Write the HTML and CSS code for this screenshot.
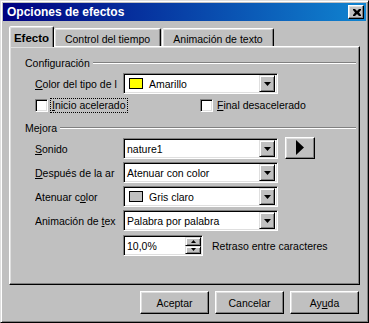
FILE: index.html
```html
<!DOCTYPE html>
<html lang="es">
<head>
    <meta charset="UTF-8">
    <title>Opciones de efectos</title>
    <link rel="stylesheet" href="styles.css">
</head>
<body>
    <div class="window">
        <div class="titlebar">
            <span class="title">Opciones de efectos</span>
            <div class="close-btn">
                <svg width="8" height="7" viewBox="0 0 8 7"><path d="M0 0h2l2 2 2-2h2v1L6 3.5 8 6v1H6L4 5 2 7H0V6l2-2.5L0 1z" fill="#000"/></svg>
            </div>
        </div>
        <div class="dialog-body">
            <div class="tabs">
                <div class="tab tab-active">Efecto</div>
                <div class="tab tab-time">Control del tiempo</div>
                <div class="tab tab-anim">Animación de texto</div>
            </div>
            <div class="panel">
                <div class="group-title"><span>Configuración</span><div class="etched"></div></div>
                <div class="field-row first-field">
                    <span class="field-label"><u>C</u>olor del tipo de l</span>
                    <div class="combo">
                        <div class="combo-value"><span class="swatch swatch-yellow"></span>Amarillo</div>
                        <div class="combo-arrow"><svg width="7" height="4" viewBox="0 0 7 4"><path d="M0 0h7L3.5 4z" fill="#000"/></svg></div>
                    </div>
                </div>
                <div class="check-row">
                    <div class="check-item check-first"><span class="checkbox"></span><span class="check-text focused"><u>I</u>nicio acelerado</span></div>
                    <div class="check-item"><span class="checkbox"></span><span class="check-text"><u>F</u>inal desacelerado</span></div>
                </div>
                <div class="group-title group-second"><span>Mejora</span><div class="etched"></div></div>
                <div class="field-row first-field">
                    <span class="field-label"><u>S</u>onido</span>
                    <div class="combo">
                        <div class="combo-value">nature1</div>
                        <div class="combo-arrow"><svg width="7" height="4" viewBox="0 0 7 4"><path d="M0 0h7L3.5 4z" fill="#000"/></svg></div>
                    </div>
                    <div class="play-btn"><svg width="8" height="15" viewBox="0 0 8 15"><path d="M0 0l8 7.5L0 15z" fill="#000"/></svg></div>
                </div>
                <div class="field-row">
                    <span class="field-label"><u>D</u>espués de la ar</span>
                    <div class="combo">
                        <div class="combo-value">Atenuar con color</div>
                        <div class="combo-arrow"><svg width="7" height="4" viewBox="0 0 7 4"><path d="M0 0h7L3.5 4z" fill="#000"/></svg></div>
                    </div>
                </div>
                <div class="field-row">
                    <span class="field-label">Atenuar c<u>o</u>lor</span>
                    <div class="combo">
                        <div class="combo-value"><span class="swatch swatch-gray"></span>Gris claro</div>
                        <div class="combo-arrow"><svg width="7" height="4" viewBox="0 0 7 4"><path d="M0 0h7L3.5 4z" fill="#000"/></svg></div>
                    </div>
                </div>
                <div class="field-row">
                    <span class="field-label">Animación de <u>t</u>ex</span>
                    <div class="combo">
                        <div class="combo-value">Palabra por palabra</div>
                        <div class="combo-arrow"><svg width="7" height="4" viewBox="0 0 7 4"><path d="M0 0h7L3.5 4z" fill="#000"/></svg></div>
                    </div>
                </div>
                <div class="field-row spin-row">
                    <span class="field-label"></span>
                    <div class="spin">
                        <div class="spin-value">10,0%</div>
                        <div class="spin-buttons">
                            <div class="spin-btn"><svg width="5" height="3" viewBox="0 0 5 3"><path d="M2.5 0L5 3H0z" fill="#000"/></svg></div>
                            <div class="spin-btn"><svg width="5" height="3" viewBox="0 0 5 3"><path d="M0 0h5L2.5 3z" fill="#000"/></svg></div>
                        </div>
                    </div>
                    <span class="spin-label">Retraso entre caracteres</span>
                </div>
            </div>
            <div class="button-row">
                <div class="btn">Aceptar</div>
                <div class="btn">Cancelar</div>
                <div class="btn">Ay<u>u</u>da</div>
            </div>
        </div>
    </div>
</body>
</html>
```

FILE: styles.css
```css
body {
    margin: 0;
    font-family: "Liberation Sans", Arial, sans-serif;
    font-size: 10.5px;
    color: #000;
    background-color: #c0c0c0;
}
u {
    text-decoration: underline;
    text-underline-offset: 1px;
}
.window {
    width: 369px;
    height: 323px;
    box-sizing: border-box;
    background-color: #c0c0c0;
    border: 1px solid;
    border-color: #dfdfdf #000 #000 #dfdfdf;
    box-shadow: inset 1px 1px #fff, inset -1px -1px #808080;
    padding: 2px;
}
.titlebar {
    height: 18px;
    display: flex;
    align-items: center;
    justify-content: space-between;
    padding: 0 2px 0 4px;
    background: linear-gradient(to right, #000080, #1084d0);
}
.title {
    color: #fff;
    font-weight: bold;
    font-size: 12px;
}
.close-btn {
    width: 16px;
    height: 14px;
    box-sizing: border-box;
    background-color: #c0c0c0;
    border: 1px solid;
    border-color: #fff #000 #000 #fff;
    box-shadow: inset -1px -1px #808080, inset 1px 1px #dfdfdf;
    display: flex;
    align-items: center;
    justify-content: center;
    padding-left: 1px;
}
.dialog-body {
    padding: 5px 6px 0 6px;
}
.tabs {
    display: flex;
    align-items: flex-end;
    height: 20px;
    position: relative;
    z-index: 1;
}
.tab {
    height: 18px;
    box-sizing: border-box;
    border: 1px solid;
    border-bottom: none;
    border-color: #fff #000 transparent #fff;
    border-radius: 2px 2px 0 0;
    box-shadow: inset -1px 0 #808080, inset 1px 1px #dfdfdf;
    padding-top: 4px;
    line-height: 13px;
    text-align: center;
    white-space: nowrap;
    background-color: #c0c0c0;
}
.tab-active {
    width: 45px;
    height: 21px;
    margin-bottom: -1px;
    padding-top: 5px;
    font-weight: bold;
    font-size: 11.5px;
}
.tab-time {
    width: 107px;
}
.tab-anim {
    width: 112px;
    margin-left: 1px;
}
.panel {
    height: 239px;
    box-sizing: border-box;
    border: 1px solid;
    border-color: #fff #000 #000 #fff;
    box-shadow: inset -1px -1px #808080, inset 1px 1px #dfdfdf;
    padding: 9px 0 0 1px;
}
.group-title {
    display: flex;
    align-items: center;
    height: 14px;
    padding-left: 14px;
    margin-right: 3px;
}
.group-second {
    margin-top: 8px;
}
.etched {
    flex: 1;
    height: 0;
    border-top: 1px solid #808080;
    border-bottom: 1px solid #fff;
    margin-left: 3px;
}
.field-row {
    display: flex;
    align-items: center;
    height: 21px;
    padding-left: 24px;
    margin-top: 3px;
}
.first-field {
    margin-top: 3px;
}
.spin-row {
    margin-top: 4px;
}
.field-label {
    width: 88px;
    white-space: nowrap;
    overflow: hidden;
}
.combo {
    width: 155px;
    height: 21px;
    box-sizing: border-box;
    display: flex;
    align-items: center;
    background-color: #fff;
    border: 1px solid;
    border-color: #808080 #fff #fff #808080;
    box-shadow: inset 1px 1px #000, inset -1px -1px #dfdfdf;
    padding: 1px 2px 1px 2px;
}
.combo-value {
    flex: 1;
    display: flex;
    align-items: center;
    padding-left: 1px;
    white-space: nowrap;
}
.swatch {
    width: 14px;
    height: 11px;
    box-sizing: border-box;
    border: 1px solid #000;
    margin: 0 6px 0 2px;
}
.swatch-yellow {
    background-color: #ffff00;
}
.swatch-gray {
    background-color: #c0c0c0;
}
.combo-arrow {
    width: 16px;
    height: 17px;
    box-sizing: border-box;
    background-color: #c0c0c0;
    border: 1px solid;
    border-color: #dfdfdf #000 #000 #dfdfdf;
    box-shadow: inset 1px 1px #fff, inset -1px -1px #808080;
    display: flex;
    align-items: center;
    justify-content: center;
    padding-top: 1px;
}
.play-btn {
    width: 30px;
    height: 22px;
    box-sizing: border-box;
    margin-left: 7px;
    margin-top: -2px;
    border: 1px solid;
    border-color: #fff #000 #000 #fff;
    box-shadow: inset -1px -1px #808080, inset 1px 1px #dfdfdf;
    display: flex;
    align-items: center;
    justify-content: center;
}
.check-row {
    display: flex;
    align-items: center;
    height: 15px;
    padding-left: 24px;
    margin-top: 4px;
}
.check-item {
    display: flex;
    align-items: center;
}
.check-first {
    width: 165px;
}
.checkbox {
    width: 13px;
    height: 13px;
    box-sizing: border-box;
    background-color: #fff;
    border: 1px solid;
    border-color: #808080 #fff #fff #808080;
    box-shadow: inset 1px 1px #000, inset -1px -1px #dfdfdf;
    margin-right: 3px;
}
.check-text {
    padding: 0 1px;
    line-height: 13px;
}
.focused {
    outline: 1px dotted #000;
}
.spin {
    width: 80px;
    height: 21px;
    box-sizing: border-box;
    display: flex;
    align-items: center;
    background-color: #fff;
    border: 1px solid;
    border-color: #808080 #fff #fff #808080;
    box-shadow: inset 1px 1px #000, inset -1px -1px #dfdfdf;
    padding: 1px;
}
.spin-value {
    flex: 1;
    padding-left: 2px;
}
.spin-buttons {
    display: flex;
    flex-direction: column;
    width: 16px;
    height: 17px;
}
.spin-btn {
    flex: 1;
    box-sizing: border-box;
    background-color: #c0c0c0;
    border: 1px solid;
    border-color: #dfdfdf #000 #000 #dfdfdf;
    box-shadow: inset 1px 1px #fff, inset -1px -1px #808080;
    display: flex;
    align-items: center;
    justify-content: center;
}
.spin-label {
    margin-left: 9px;
}
.button-row {
    display: flex;
    justify-content: flex-end;
    gap: 6px;
    margin-top: 6px;
    padding-right: 1px;
}
.btn {
    width: 69px;
    height: 23px;
    box-sizing: border-box;
    border: 1px solid;
    border-color: #fff #000 #000 #fff;
    box-shadow: inset -1px -1px #808080, inset 1px 1px #dfdfdf;
    display: flex;
    align-items: center;
    justify-content: center;
}
```
